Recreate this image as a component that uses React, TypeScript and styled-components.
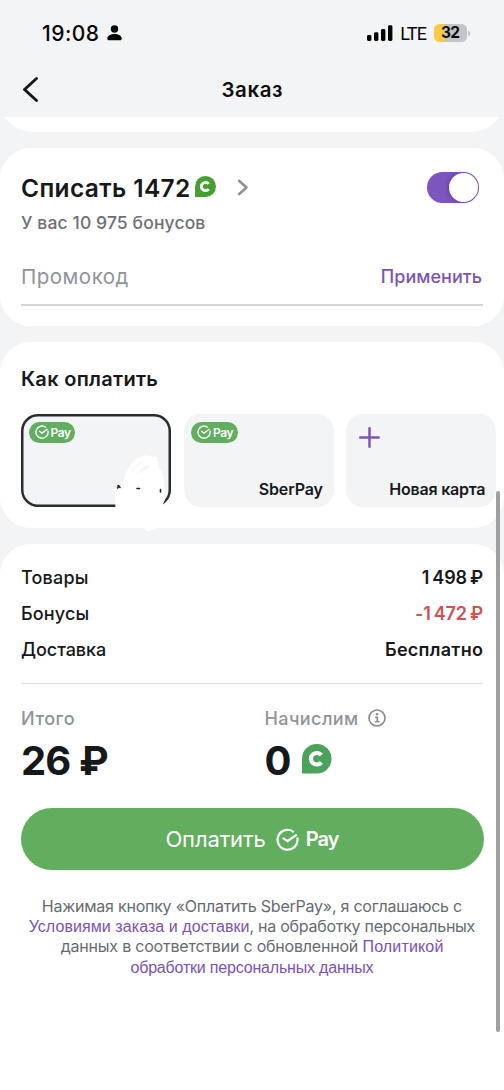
import React from "react";
import styled, { createGlobalStyle } from "styled-components";

const GlobalStyle = createGlobalStyle`
  * { box-sizing: border-box; }
  body {
    margin: 0;
    background: #f3f4f6;
    color: #16181a;
    font-family: Inter, "Liberation Sans", sans-serif;
    overflow: hidden;
  }
  svg { display: block; flex: none; }
`;

const Screen = styled.main`
  position: relative;
  display: flex;
  flex-direction: column;
  width: 504px;
  height: 1090px;
  overflow: hidden;
  background: #f3f4f6;
`;

type TextProps = { $size: number; $weight?: number; $color?: string; $ls?: number; $ws?: number };

const Text = styled.span<TextProps>`
  font-size: ${(p) => p.$size}px;
  font-weight: ${(p) => p.$weight ?? 400};
  color: ${(p) => p.$color ?? "inherit"};
  letter-spacing: ${(p) => p.$ls ?? 0}px;
  margin-right: ${(p) => -(p.$ls ?? 0)}px;
  word-spacing: ${(p) => p.$ws ?? 0}px;
  white-space: pre;
`;

const StatusBar = styled.div`
  display: flex;
  align-items: center;
  height: 28px;
  margin-top: 19px;
  padding: 0 34px 0 42px;
`;

const Clock = styled.div`
  display: flex;
  align-items: center;
  gap: 8px;
  margin-right: auto;
`;

const Indicators = styled.div`
  display: flex;
  align-items: center;
  gap: 7px;
`;

const Network = styled(Text)`
  font-family: Roboto, sans-serif;
`;

const Battery = styled.div`
  display: flex;
  align-items: center;
  justify-content: center;
  width: 33px;
  height: 18px;
  border-radius: 5.5px;
  line-height: 18px;
  color: #0b0b0b;
  background: linear-gradient(90deg, #f6cb45 0 11.5px, #c3c4c5 11.5px);
`;

const BatteryGroup = styled.div`
  display: flex;
  align-items: center;
  gap: 1px;
`;

const BatteryTip = styled.div`
  width: 2px;
  height: 5px;
  border-radius: 0 2px 2px 0;
  background: #c3c4c5;
`;

const NavBar = styled.header`
  display: grid;
  grid-template-columns: 60px 1fr 60px;
  align-items: center;
  justify-items: center;
  height: 70px;
  padding-top: 14px;
`;

const BackButton = styled.button`
  justify-self: start;
  padding: 0 0 0 22px;
  border: 0;
  background: none;
`;

const PreviousClip = styled.div`
  display: flex;
  align-items: flex-end;
  height: 14.5px;
  overflow: hidden;
  flex: none;
`;

const PreviousCard = styled.div`
  width: 100%;
  height: 80px;
  flex: none;
  border-radius: 32px;
  background: #fff;
`;

const Card = styled.section<{ $top: number }>`
  display: flex;
  flex-direction: column;
  flex: none;
  margin-top: 16px;
  padding: ${(p) => p.$top}px 21px 0;
  border-radius: 31px;
  background: #fff;
`;

const BonusCard = styled(Card)`
  height: 178.5px;
`;

const PayCard = styled(Card)`
  height: 186px;
`;

const SummaryCard = styled(Card)`
  flex: 1;
  border-radius: 31px 31px 0 0;
`;

const BonusRow = styled.div`
  display: flex;
  align-items: center;
  height: 31px;
`;

const CoinSlot = styled.div`
  margin: -3px 21px 0 5px;
`;

const Toggle = styled.div`
  display: flex;
  justify-content: flex-end;
  width: 52px;
  height: 31px;
  margin: 0 4px 0 auto;
  padding: 1px;
  border-radius: 16px;
  background: #7d55c0;
`;

const Knob = styled.div`
  width: 29px;
  height: 29px;
  border-radius: 50%;
  background: #fff;
  box-shadow: -2px 0 4px rgba(50, 20, 90, 0.25);
`;

const BonusBalance = styled.div`
  height: 22px;
  margin-top: 9px;
  line-height: 22px;
`;

const PromoField = styled.div`
  display: flex;
  align-items: center;
  justify-content: space-between;
  height: 45px;
  margin-top: 27px;
  padding: 0 1px 13px 0;
  border-bottom: 2px solid #d4d5d6;
`;

const SectionTitle = styled.h2`
  margin: 0;
  height: 26px;
  line-height: 26px;
  font-size: 20px;
`;

const Tiles = styled.div`
  display: flex;
  gap: 12.5px;
  margin-top: 22px;
`;

const Tile = styled.div<{ $selected?: boolean }>`
  position: relative;
  display: flex;
  flex-direction: column;
  justify-content: space-between;
  flex: none;
  width: 150px;
  height: 93px;
  padding: 8px 10.5px 8px 7.5px;
  border-radius: 17px;
  background: #f3f4f6;
  box-shadow: ${(p) => (p.$selected ? "inset 0 0 0 2.5px #2a2d30" : "none")};
`;

const TileLabel = styled.div`
  align-self: flex-end;
  height: 20px;
  line-height: 20px;
`;

const PayPill = styled.div`
  display: flex;
  align-items: center;
  align-self: flex-start;
  gap: 2px;
  width: 46.5px;
  height: 20.5px;
  padding-left: 6px;
  border-radius: 11px;
  color: #fff;
  background: #62ae5f;
`;

const PlusSlot = styled.div`
  padding: 5px 0 0 5px;
`;

const Scribble = styled.svg`
  position: absolute;
  left: 92px;
  top: 40px;
`;

const SummaryRow = styled.div`
  display: flex;
  align-items: center;
  justify-content: space-between;
  height: 36px;
`;

const Divider = styled.div`
  height: 1px;
  margin-top: 16px;
  background: #d9e4e5;
`;

const Totals = styled.div`
  display: grid;
  grid-template-columns: 243.5px 1fr;
  margin-top: 22px;
`;

const TotalLabel = styled.div`
  display: flex;
  align-items: center;
  gap: 10px;
  height: 24px;
`;

const TotalValue = styled.div`
  display: flex;
  align-items: center;
  gap: 11px;
  height: 44px;
  margin-top: 8px;
`;

const ValueCoin = styled.div`
  margin-top: -2px;
`;

const PayButton = styled.button`
  display: flex;
  align-items: center;
  justify-content: center;
  width: 463px;
  height: 62px;
  flex: none;
  margin-top: 26px;
  padding: 0;
  border: 0;
  border-radius: 31px;
  font-family: inherit;
  color: #fff;
  background: #62ae5f;
`;

const CheckSlot = styled.div`
  margin: 0 7px 0 10px;
`;

const Terms = styled.div`
  display: flex;
  flex-direction: column;
  align-items: center;
  margin-top: 26px;
  color: #666b70;
`;

const TermsLine = styled.div<{ $gap?: number }>`
  display: flex;
  align-items: baseline;
  height: 20px;
  margin-top: ${(p) => p.$gap ?? 0}px;
  line-height: 20px;
`;

const Link = styled(Text)`
  font-family: "Liberation Sans", sans-serif;
  color: #7a52b8;
`;

const ScrollThumb = styled.div`
  position: absolute;
  right: 4px;
  top: 491px;
  width: 4px;
  height: 541px;
  border-radius: 2px;
  background: #9fa0a2;
`;

const Coin = ({ size, color }: { size: number; color: string }) => (
  <svg width={size} height={size} viewBox="0 0 30 30">
    <path d="M0 30V15A15 15 0 1 1 15 30Z" fill={color} />
    <path d="M19.6 11.3A5.900 5.900 0 1 0 19.6 18.7" fill="none" stroke="#fff" strokeWidth="4.2" />
  </svg>
);

const SberCheck = ({ size, width }: { size: number; width: number }) => (
  <svg width={size} height={size} viewBox="0 0 24 24" fill="none" stroke="#fff" strokeWidth={width}>
    <path d="M18.6 4.2A10.4 10.4 0 1 0 22.2 10" />
    <path d="M7 10.2L12 13.8L21.6 6.8" />
  </svg>
);

const Pill = () => (
  <PayPill>
    <SberCheck size={14} width={2.4} />
    <Text $size={12} $weight={600} $ls={-0.4}>Pay</Text>
  </PayPill>
);

const rows = [
  { label: "Товары", ls: 0.2, value: "1 498 ₽", vls: -0.2, ws: -1.2 },
  { label: "Бонусы", ls: 0.15, value: "-1 472 ₽", vls: -0.2, ws: -1.2, color: "#cd5353" },
  { label: "Доставка", ls: -0.05, value: "Бесплатно", vls: 0.28, ws: 0 },
];

export default function App() {
  return (
    <Screen>
      <GlobalStyle />
      <StatusBar>
        <Clock>
          <Text $size={21} $weight={550} $ls={0.5} $color="#050505">19:08</Text>
          <svg width="15" height="16" viewBox="0 0 15 16" fill="#050505">
            <circle cx="7.5" cy="4" r="3.7" />
            <path d="M0.3 13.6C0.3 10.7 3.6 9 7.5 9S14.7 10.7 14.7 13.6C14.7 15 13.9 15.3 12.9 15.3H2.1C1.1 15.3 0.3 15 0.3 13.6Z" />
          </svg>
        </Clock>
        <Indicators>
          <svg width="26" height="16" viewBox="0 0 26 16" fill="#050505">
            <rect x="0" y="10" width="4.4" height="6" rx="1.4" />
            <rect x="7" y="7.3" width="4.4" height="8.7" rx="1.4" />
            <rect x="14" y="4" width="4.4" height="12" rx="1.4" />
            <rect x="21" y="0.3" width="4.4" height="15.7" rx="1.4" />
          </svg>
          <Network $size={18} $ls={-0.8} $color="#050505">LTE</Network>
          <BatteryGroup>
            <Battery>
              <Text $size={15.5} $weight={700} $ls={-0.6}>32</Text>
            </Battery>
            <BatteryTip />
          </BatteryGroup>
        </Indicators>
      </StatusBar>

      <NavBar>
        <BackButton aria-label="Назад">
          <svg width="17" height="27" viewBox="0 0 17 27" fill="none" stroke="#16181a" strokeWidth="3" strokeLinecap="round" strokeLinejoin="round">
            <path d="M14.5 2.5L2.5 13.5L14.5 24.500" />
          </svg>
        </BackButton>
        <Text $size={20.5} $weight={600} $ls={0.6} $color="#0c0d0e">Заказ</Text>
      </NavBar>

      <PreviousClip>
        <PreviousCard />
      </PreviousClip>

      <BonusCard $top={24.5}>
        <BonusRow>
          <Text $size={24.5} $weight={600} $ls={0.37}>Списать 1472</Text>
          <CoinSlot>
            <Coin size={21} color="#459f33" />
          </CoinSlot>
          <svg width="12" height="17" viewBox="0 0 12 17" fill="none" stroke="#8d9195" strokeWidth="2.5" strokeLinecap="round" strokeLinejoin="round">
            <path d="M2 1.8L9.5 8.5L2 15.2" />
          </svg>
          <Toggle>
            <Knob />
          </Toggle>
        </BonusRow>
        <BonusBalance>
          <Text $size={17.5} $weight={450} $ls={0.13} $color="#6c7176">У вас 10 975 бонусов</Text>
        </BonusBalance>
        <PromoField>
          <Text $size={20.5} $ls={0.5} $color="#8f9498">Промокод</Text>
          <Text $size={18} $weight={500} $ls={0.05} $color="#7c55b8">Применить</Text>
        </PromoField>
      </BonusCard>

      <PayCard $top={24}>
        <SectionTitle>
          <Text $size={20} $weight={600} $ls={0.3}>Как оплатить</Text>
        </SectionTitle>
        <Tiles>
          <Tile $selected>
            <Pill />
            <Scribble width="58" height="80" viewBox="0 0 58 80" fill="none" stroke="#fff" strokeWidth="5" strokeLinecap="round" strokeLinejoin="round">
              <path d="M5 36L11 30L14 23L24 20L38 13L46 14L50 34L50 46L45 53L40 64L24 60L6 54Z" fill="#fff" stroke="none" />
              <path d="M12 32C15 14 23 5 32 4C38 3 40 8 38 14" />
              <path d="M16 28C22 16 30 8 42 5L43 14C48 17 50 30 49 46" />
              <path d="M4 36L5 54M12 46L15 60L24 50L31 66L39 54L42 64L49 46" />
              <path d="M28 66L35 75L41 73L40 62" />
              <path d="M5 31.500L7 33.500M4.500 34L6 32M24 34.500H26.500M47.500 35.500V38" stroke="#202224" strokeWidth="1.600" />
            </Scribble>
          </Tile>
          <Tile>
            <Pill />
            <TileLabel>
              <Text $size={16} $weight={600} $ls={-0.1}>SberPay</Text>
            </TileLabel>
          </Tile>
          <Tile>
            <PlusSlot>
              <svg width="21" height="21" viewBox="0 0 21 21" stroke="#7c55b8" strokeWidth="2.5" strokeLinecap="round">
                <path d="M10.5 1.3V19.7M1.3 10.5H19.7" />
              </svg>
            </PlusSlot>
            <TileLabel>
              <Text $size={16} $weight={600} $ls={-0.22}>Новая карта</Text>
            </TileLabel>
          </Tile>
        </Tiles>
      </PayCard>

      <SummaryCard $top={15}>
        {rows.map((r) => (
          <SummaryRow key={r.label}>
            <Text $size={18} $weight={450} $ls={r.ls}>{r.label}</Text>
            <Text $size={18} $weight={600} $ls={r.vls} $ws={r.ws} $color={r.color}>{r.value}</Text>
          </SummaryRow>
        ))}
        <Divider />
        <Totals>
          <div>
            <TotalLabel>
              <Text $size={18} $weight={500} $ls={0.5} $color="#8f9498">Итого</Text>
            </TotalLabel>
            <TotalValue>
              <Text $size={40} $weight={750} $ls={-0.9}>26 ₽</Text>
            </TotalValue>
          </div>
          <div>
            <TotalLabel>
              <Text $size={18} $weight={500} $ls={0.4} $color="#8f9498">Начислим</Text>
              <svg width="18" height="18" viewBox="0 0 18 18" fill="none" stroke="#868b8f" strokeWidth="1.6">
                <circle cx="9" cy="9" r="8" />
                <path d="M7.2 8.2H9.3V12.6M6.9 12.8H11.3" />
                <circle cx="9" cy="5.3" r="1.2" fill="#868b8f" stroke="none" />
              </svg>
            </TotalLabel>
            <TotalValue>
              <Text $size={40} $weight={750}>0</Text>
              <ValueCoin>
                <Coin size={29.5} color="#4ba35b" />
              </ValueCoin>
            </TotalValue>
          </div>
        </Totals>
        <PayButton>
          <Text $size={22} $ls={-0.14}>Оплатить</Text>
          <CheckSlot>
            <SberCheck size={23} width={2.3} />
          </CheckSlot>
          <Text $size={20} $weight={600} $ls={-0.9}>Pay</Text>
        </PayButton>
        <Terms>
          <TermsLine>
            <Text $size={16} $ls={-0.23}>Нажимая кнопку «Оплатить SberPay», я соглашаюсь с</Text>
          </TermsLine>
          <TermsLine>
            <Link $size={16} $ls={0.07}>Условиями заказа и доставки</Link>
            <Text $size={16} $ls={-0.27}>, на обработку персональных</Text>
          </TermsLine>
          <TermsLine>
            <Text $size={16} $ls={-0.21}>данных в соответствии с обновленной </Text>
            <Link $size={16} $ls={0.15}>Политикой</Link>
          </TermsLine>
          <TermsLine $gap={2}>
            <Link $size={16} $ls={-0.19}>обработки персональных данных</Link>
          </TermsLine>
        </Terms>
      </SummaryCard>
      <ScrollThumb />
    </Screen>
  );
}
